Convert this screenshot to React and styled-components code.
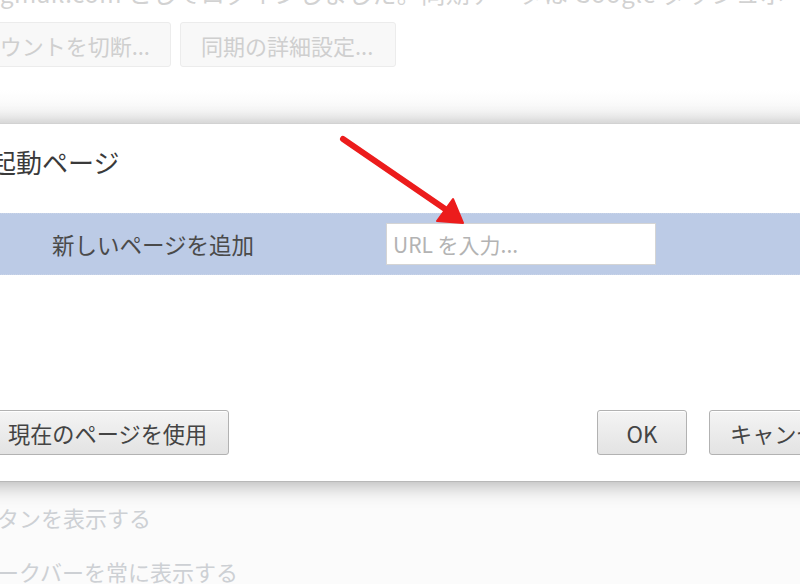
import React from 'react'
import styled, { createGlobalStyle } from 'styled-components'

const GlobalStyle = createGlobalStyle`
  html, body {
    margin: 0;
    padding: 0;
    overflow: hidden;
    background: #fafafa;
  }
  body {
    font-family: "Noto Sans CJK JP", "Open Sans", sans-serif;
  }
`

const Frame = styled.div`
  position: relative;
  width: 800px;
  height: 584px;
  overflow: hidden;
  background: #fbfbfb;
`

const TopArea = styled.div`
  height: 123px;
  background: linear-gradient(#ffffff 0, #ffffff 90px, #f4f4f4 123px);
  overflow: hidden;
`

const FadedLine = styled.div`
  margin-top: -22px;
  height: 30px;
  font-size: 24px;
  line-height: 30px;
  color: #d2d2d2;
  white-space: nowrap;
  letter-spacing: 0.5px;
`

const FadedButtons = styled.div`
  display: flex;
  gap: 9px;
  margin-top: 14px;
  margin-left: -60px;
`

const FadedButton = styled.div`
  height: 45px;
  padding: 0 20px;
  display: flex;
  align-items: center;
  justify-content: ${p => (p.$right ? 'flex-end' : 'flex-start')};
  border: 1px solid #ececec;
  border-radius: 3px;
  background: #f8f8f8;
  color: #cfcfcf;
  font-size: 22px;
  white-space: nowrap;
  width: ${p => p.$w}px;
  box-sizing: border-box;
`

const Dialog = styled.div`
  position: relative;
  margin-left: -30px;
  width: 880px;
  height: 359px;
  box-sizing: border-box;
  background: #ffffff;
  border-top: 1px solid #d2d2d2;
  border-bottom: 1px solid #b8b8b8;
  box-shadow: 0 3px 20px rgba(0, 0, 0, 0.3);
  display: flex;
  flex-direction: column;
`

const Title = styled.h1`
  margin: 0;
  padding: 18px 0 0 20px;
  height: 89px;
  box-sizing: border-box;
  font-size: 26px;
  font-weight: 400;
  line-height: 40px;
  color: #3a3a3a;
`

const PageRow = styled.div`
  height: 62px;
  display: flex;
  align-items: center;
  background: #bccbe6;
  border-top: 1px dotted #c9d4e8;
  border-bottom: 1px dotted #c9d4e8;
  box-sizing: border-box;
`

const RowLabel = styled.span`
  width: 334px;
  padding-left: 82px;
  font-size: 22.5px;
  color: #4a4a4a;
  white-space: nowrap;
`

const UrlInput = styled.input`
  width: 270px;
  height: 42px;
  box-sizing: border-box;
  border: 1px solid #d4d4d4;
  background: #fff;
  padding: 0 6px;
  font-family: "Noto Sans CJK JP", "Open Sans", sans-serif;
  font-size: 21px;
  color: #444;
  outline: none;
  &::placeholder {
    color: #b3b3b3;
  }
`

const Footer = styled.div`
  margin-top: 135px;
  display: flex;
  align-items: center;
  padding: 0 0 0 17px;
`

const Button = styled.button`
  height: 45px;
  box-sizing: border-box;
  padding: 0 20px;
  width: ${p => p.$w}px;
  margin-left: ${p => p.$ml || 0}px;
  border: 1px solid #b2b2b2;
  border-radius: 3px;
  background: linear-gradient(#f4f4f4, #e3e3e3);
  box-shadow: inset 0 1px 0 #fff;
  font-family: "Noto Sans CJK JP", "Open Sans", sans-serif;
  font-size: 22.2px;
  color: #444;
  white-space: nowrap;
  text-align: ${p => (p.$center ? 'center' : 'left')};
`

const BottomArea = styled.div`
  padding-top: 17px;
`

const FadedLabel = styled.div`
  height: 54px;
  margin-left: -3px;
  font-size: 22px;
  line-height: 36px;
  color: #cdd0d4;
  white-space: nowrap;
`

const Arrow = styled.svg`
  position: absolute;
  left: 0;
  top: 0;
  pointer-events: none;
`

export default function App() {
  return (
    <>
      <GlobalStyle />
      <Frame>
        <TopArea>
          <FadedLine>gmail.com としてログインしました。同期データは Google ダッシュボードで管理できます</FadedLine>
          <FadedButtons>
            <FadedButton $w={231} $right>アカウントを切断...</FadedButton>
            <FadedButton $w={216}>同期の詳細設定...</FadedButton>
          </FadedButtons>
        </TopArea>
        <Dialog>
          <Title>起動ページ</Title>
          <PageRow>
            <RowLabel>新しいページを追加</RowLabel>
            <UrlInput placeholder="URL を入力..." />
          </PageRow>
          <Footer>
            <Button $w={242}>現在のページを使用</Button>
            <Button $w={90} $ml={368} $center>OK</Button>
            <Button $w={130} $ml={22}>キャンセル</Button>
          </Footer>
        </Dialog>
        <BottomArea>
          <FadedLabel>タンを表示する</FadedLabel>
          <FadedLabel>ークバーを常に表示する</FadedLabel>
        </BottomArea>
        <Arrow width="800" height="584" viewBox="0 0 800 584">
          <line x1="343" y1="139" x2="448" y2="211" stroke="#ec1c1c" strokeWidth="6" strokeLinecap="round" />
          <polygon points="463,223 437,221 453,199" fill="#ec1c1c" stroke="#ec1c1c" strokeWidth="2" strokeLinejoin="round" />
        </Arrow>
      </Frame>
    </>
  )
}
